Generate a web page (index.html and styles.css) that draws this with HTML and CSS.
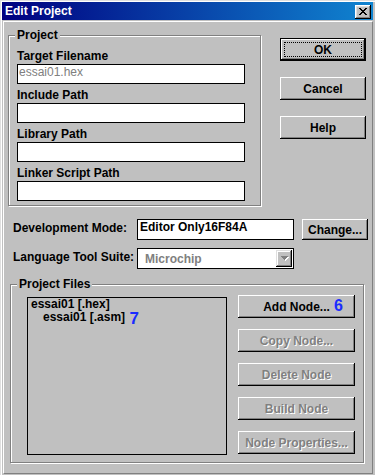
FILE: index.html
```html
<!DOCTYPE html>
<html>
<head>
<meta charset="utf-8">
<link rel="stylesheet" href="styles.css">
</head>
<body>
<div class="window">
  <div class="titlebar">
    <span class="title">Edit Project</span>
    <div class="close">
      <svg width="8" height="7" viewBox="0 0 8 7" shape-rendering="crispEdges"><path fill="#000" d="M0 0h2v1H0zM6 0h2v1H6zM1 1h2v1H1zM5 1h2v1H5zM2 2h4v1H2zM3 3h2v1H3zM2 4h4v1H2zM1 5h2v1H1zM5 5h2v1H5zM0 6h2v1H0zM6 6h2v1H6z"/></svg>
    </div>
  </div>
  <div class="client">
    <div class="top">
      <div class="group project">
        <span class="legend">Project</span>
        <div class="label">Target Filename</div>
        <div class="field gray">essai01.hex</div>
        <div class="label">Include Path</div>
        <div class="field"></div>
        <div class="label">Library Path</div>
        <div class="field"></div>
        <div class="label">Linker Script Path</div>
        <div class="field"></div>
      </div>
      <div class="btncol">
        <div class="btn default">OK</div>
        <div class="btn">Cancel</div>
        <div class="btn">Help</div>
      </div>
    </div>
    <div class="row mode">
      <div class="rlabel">Development Mode:</div>
      <div class="rinput">Editor Only16F84A</div>
      <div class="btn change">Change...</div>
    </div>
    <div class="row suite">
      <div class="rlabel">Language Tool Suite:</div>
      <div class="combo">
        <span class="combotext">Microchip</span>
        <div class="drop">
          <svg width="16" height="17" viewBox="0 0 16 17" shape-rendering="crispEdges">
            <path fill="#fff" d="M6 7h7v1H6zM7 8h5v1H7zM8 9h3v1H8zM9 10h1v1H9z"/>
            <path fill="#808080" d="M5 6h7v1H5zM6 7h5v1H6zM7 8h3v1H7zM8 9h1v1H8z"/>
          </svg>
        </div>
      </div>
    </div>
    <div class="group files">
      <span class="legend">Project Files</span>
      <div class="listbox">
        <div class="item">essai01 [.hex]</div>
        <div class="item sub">essai01 [.asm] <span class="num seven">7</span></div>
      </div>
      <div class="nodecol">
        <div class="btn node">Add Node...<span class="num six">6</span></div>
        <div class="btn node disabled">Copy Node...</div>
        <div class="btn node disabled">Delete Node</div>
        <div class="btn node disabled">Build Node</div>
        <div class="btn node disabled">Node Properties...</div>
      </div>
    </div>
  </div>
</div>
</body>
</html>
```
FILE: styles.css
```css
* { box-sizing: border-box; }
body {
  margin: 0;
  background: #c0c0c0;
  font-family: "Liberation Sans", Arial, sans-serif;
  font-weight: bold;
  font-size: 12px;
  color: #000;
}
.window {
  width: 375px;
  height: 475px;
  padding: 2px;
  background: #c0c0c0;
  box-shadow: inset 1px 1px #dfdfdf, inset 2px 2px #fff;
}
.titlebar {
  height: 18px;
  background: linear-gradient(90deg, #000080, #1084d0);
  display: flex;
  align-items: flex-start;
  justify-content: space-between;
}
.title {
  color: #fff;
  line-height: 17px;
  padding: 1px 0 0 3px;
}
.close {
  width: 16px;
  height: 14px;
  margin: 3px 2px 0 0;
  background: #c0c0c0;
  box-shadow: inset -1px -1px #000, inset 1px 1px #fff, inset -2px -2px #808080, inset 2px 2px #dfdfdf;
  display: flex;
  align-items: flex-start;
  justify-content: flex-start;
  padding: 3px 0 0 4px;
}
.close svg { display: block; }
.client {
  margin: 1px 0 0 1px;
  height: 453px;
  border-top: 1px solid #fff;
  border-left: 1px solid #fff;
  border-right: 1px solid #808080;
  border-bottom: 1px solid #808080;
}
.top {
  display: flex;
  align-items: flex-start;
  padding: 13px 0 0 4px;
}
.group {
  position: relative;
  border: 1px solid #808080;
  box-shadow: inset 1px 1px #fff, 1px 1px #fff;
}
.legend {
  position: absolute;
  top: -8px;
  left: 6px;
  padding: 0 2px;
  line-height: 14px;
  background: #c0c0c0;
}
.project {
  width: 253px;
  padding: 13px 15px 4px 8px;
}
.label { line-height: 14px; }
.field {
  height: 20px;
  margin-top: 1px;
  border: 1px solid #000;
  background: #fff;
  line-height: 14px;
  padding: 0 1px;
  font-weight: normal;
}
.field + .label { margin-top: 4px; }
.gray { color: #808080; }
.btncol {
  width: 86px;
  margin: 3px 0 0 19px;
  display: flex;
  flex-direction: column;
  gap: 16px;
}
.btn {
  position: relative;
  height: 23px;
  display: flex;
  align-items: center;
  justify-content: center;
  background: #c0c0c0;
  box-shadow: inset -1px -1px #000, inset 1px 1px #fff, inset -2px -2px #808080;
  white-space: nowrap;
}
.btn.default { border: 1px solid #000; }
.btn.default::after {
  content: "";
  position: absolute;
  top: 3px;
  left: 3px;
  right: 3px;
  bottom: 3px;
  border: 1px dotted #000;
}
.row {
  display: flex;
  align-items: flex-start;
  padding-left: 9px;
  margin-top: 13px;
}
.row.suite { margin-top: 8px; }
.rlabel {
  width: 124px;
  flex-shrink: 0;
  padding-top: 2px;
  line-height: 14px;
  white-space: nowrap;
}
.rinput {
  width: 157px;
  height: 21px;
  border: 1px solid #000;
  background: #fff;
  line-height: 14px;
  padding: 0 2px;
}
.btn.change {
  width: 66px;
  height: 21px;
  margin-left: 8px;
}
.combo {
  width: 157px;
  height: 21px;
  border: 1px solid #000;
  background: #fff;
  padding: 1px;
  display: flex;
  align-items: flex-start;
}
.combotext {
  color: #808080;
  line-height: 14px;
  padding: 2px 0 0 6px;
}
.drop {
  margin-left: auto;
  width: 16px;
  height: 17px;
  background: #c0c0c0;
  box-shadow: inset -1px -1px #000, inset 1px 1px #dfdfdf, inset -2px -2px #808080, inset 2px 2px #fff;
}
.drop svg { display: block; }
.files {
  width: 354px;
  margin: 15px 0 0 6px;
  padding: 12px 8px 7px 16px;
  display: flex;
  align-items: flex-start;
  gap: 11px;
}
.listbox {
  width: 200px;
  height: 158px;
  border: 1px solid #000;
  background: #c0c0c0;
  padding: 0 3px;
  flex-shrink: 0;
}
.item { line-height: 13px; white-space: nowrap; }
.item.sub { padding-left: 12px; }
.num {
  color: #1a2cff;
  font-size: 16px;
}
.seven {
  margin-left: 1px;
  font-size: 17px;
  vertical-align: -3px;
  line-height: 13px;
}
.nodecol {
  width: 117px;
  margin-top: -2px;
  display: flex;
  flex-direction: column;
  gap: 11px;
}
.six {
  position: absolute;
  left: 96px;
  top: 3px;
  line-height: 16px;
}
.btn.disabled {
  color: #808080;
  text-shadow: 1px 1px 0 #fff;
}
```
